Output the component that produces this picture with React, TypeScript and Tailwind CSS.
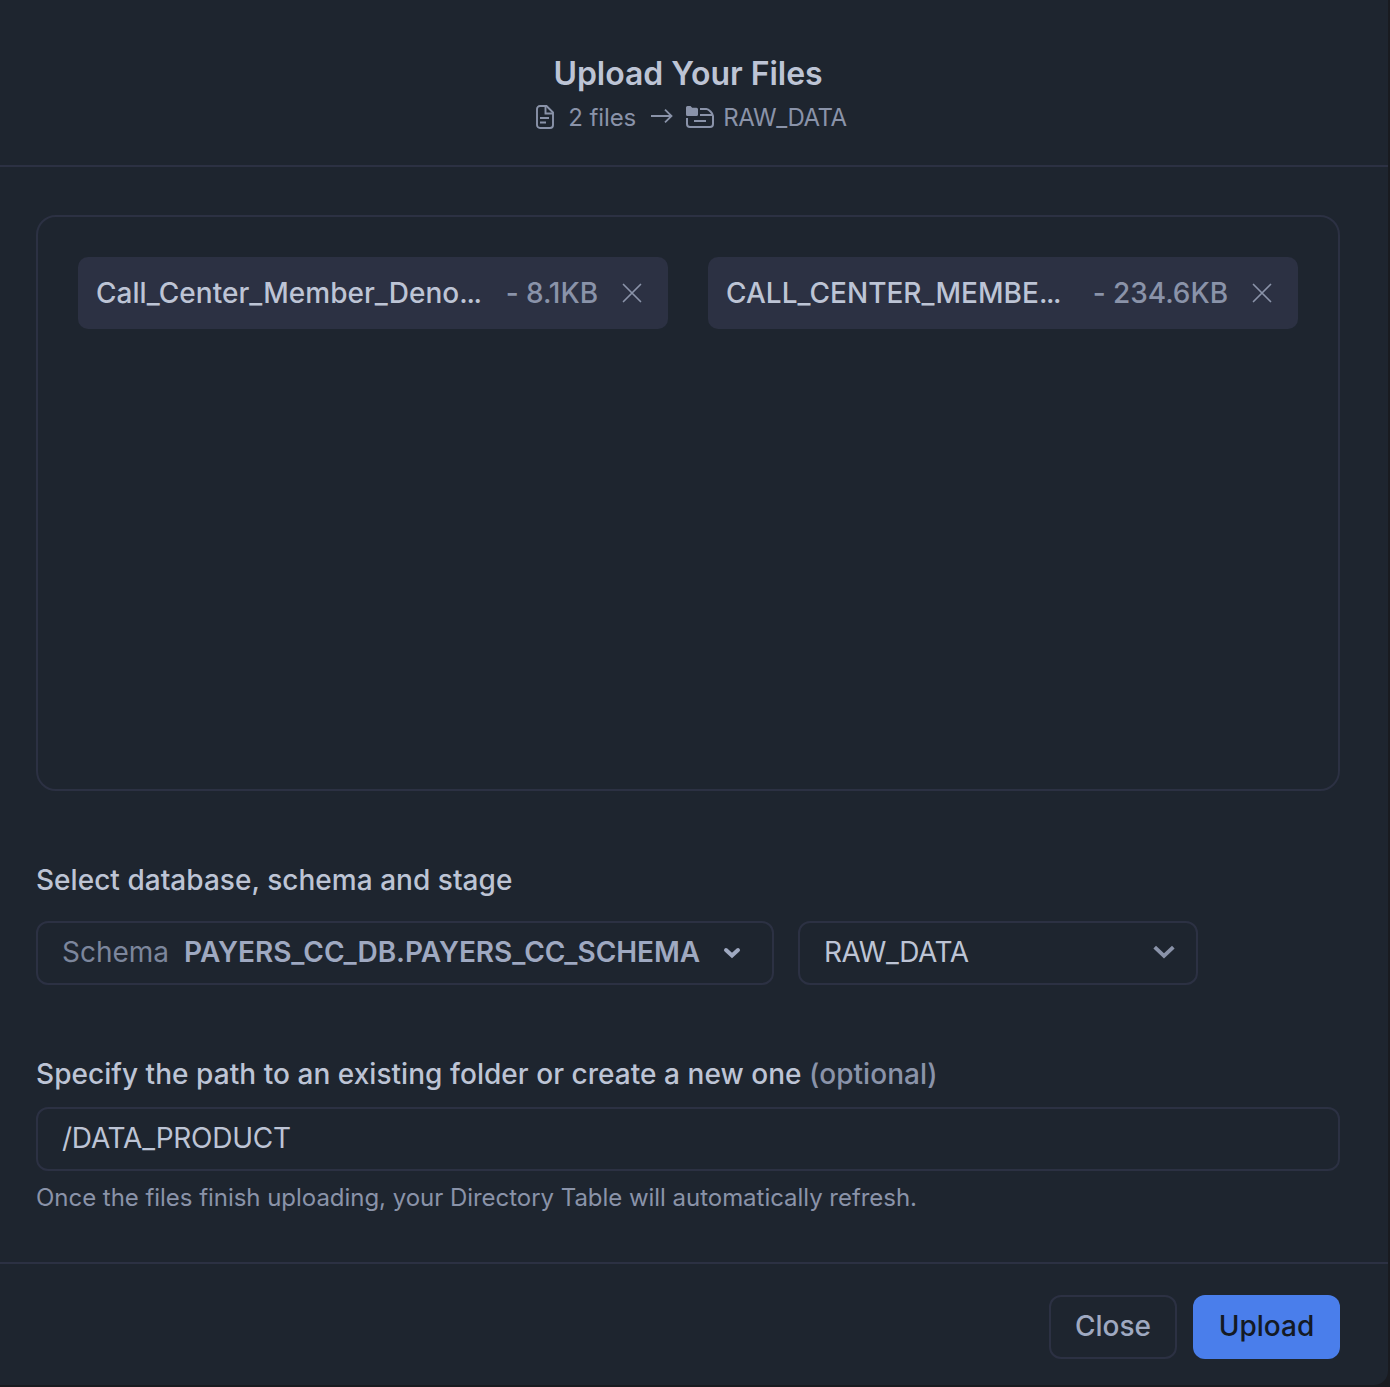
import { useState } from "react";

function DocumentIcon() {
  return (
    <svg className="h-6 w-[18px] shrink-0" viewBox="0 0 18 24" fill="none" stroke="currentColor" strokeWidth="1.9">
      <path d="M1 4A3 3 0 0 1 4 1H10.500L17 7.500V20A3 3 0 0 1 14 23H4A3 3 0 0 1 1 20Z" />
      <path d="M9.500 1V8.500H17M4 13H13M4 17.500H10" />
    </svg>
  );
}

function ArrowIcon() {
  return (
    <svg className="h-[14px] w-[22px] shrink-0" viewBox="0 0 22 14" fill="none" stroke="currentColor" strokeWidth="1.8">
      <path d="M0 7H20.500M14 0.700L20.500 7L14 13.300" />
    </svg>
  );
}

function StageIcon() {
  return (
    <svg className="h-[22px] w-7 shrink-0" viewBox="0 0 28 22" fill="none" stroke="currentColor" strokeWidth="2">
      <path
        d="M0 1.500A1.500 1.500 0 0 1 1.500 0H4.500L6.200 1.800H10.500A1.500 1.500 0 0 1 12 3.300V8.500A1.500 1.500 0 0 1 10.500 10H1.500A1.500 1.500 0 0 1 0 8.500Z"
        fill="currentColor"
        stroke="none"
      />
      <path d="M14 3H20.500C22.500 3 27 7.500 27 10V18A3 3 0 0 1 24 21H4A3 3 0 0 1 1 18V12M14 9H26.500M8 15H20" />
    </svg>
  );
}

function CloseIcon() {
  return (
    <svg className="h-5 w-5 shrink-0 text-[#8a93a9]" viewBox="0 0 20 20" fill="none" stroke="currentColor" strokeWidth="1.7" strokeLinecap="round">
      <path d="M1.500 1.500L18.500 18.500M18.500 1.500L1.500 18.500" />
    </svg>
  );
}

const initialFiles = [
  { name: "Call_Center_Member_Deno", size: "8.1KB" },
  { name: "CALL_CENTER_MEMBE", size: "234.6KB" },
];

export default function App() {
  const [files, setFiles] = useState(initialFiles);
  const [path, setPath] = useState("/DATA_PRODUCT");

  return (
    <div className="h-[1387px] w-[1390px] overflow-hidden bg-[#191b20] font-['Inter',sans-serif] text-[28px] leading-10 text-[#bdc4d5]">
      <main className="flex h-[1385px] w-[1388px] flex-col rounded-br-[14px] bg-[#1e252f]">
        <header className="flex h-[167px] shrink-0 flex-col items-center border-b-2 border-[#2c3143] pt-[54px] pr-12 pl-9">
          <h1 className="text-[32px] leading-10 font-semibold tracking-[-0.03px]">Upload Your Files</h1>
          <div className="mt-[7px] flex h-8 items-center pl-[7px] text-2xl leading-8 text-[#8a93a9]">
            <DocumentIcon />
            <span className="mt-[2px] ml-[14px] tracking-[-0.1px]">2 files</span>
            <span className="mt-[-2px] ml-[15px]">
              <ArrowIcon />
            </span>
            <span className="ml-[13px]">
              <StageIcon />
            </span>
            <span className="mt-[2px] ml-[9px] tracking-[-0.45px]">RAW_DATA</span>
          </div>
        </header>

        <section className="flex grow flex-col pr-12 pl-9">
          <div className="mt-12 grid h-[576px] shrink-0 grid-cols-2 items-start gap-10 rounded-[20px] border-2 border-[#2c3143] p-10">
            {files.map((file) => (
              <div key={file.name} className="flex h-[72px] items-center rounded-[10px] bg-[#2c3143] pr-[26px] pl-[18px] font-medium">
                <span className="grow whitespace-nowrap tracking-[0.03px]">
                  {file.name}
                  <span className="tracking-[-1.4px]">...</span>
                </span>
                <span className="whitespace-nowrap tracking-[-0.05px] text-[#8a93a9]">- {file.size}</span>
                <button
                  className="ml-6 flex"
                  aria-label="Remove file"
                  onClick={() => setFiles(files.filter((f) => f !== file))}
                >
                  <CloseIcon />
                </button>
              </div>
            ))}
          </div>

          <h2 className="mt-[69px] font-medium tracking-[0.03px]">Select database, schema and stage</h2>
          <div className="mt-[21px] flex gap-6">
            <button className="flex h-16 w-[738px] items-center rounded-xl border-2 border-[#2c3143] pb-[2px] pl-6">
              <span className="text-[#7c869c]">Schema</span>
              <span className="ml-[15px] font-semibold tracking-[-0.03px] text-[#9fa9c1]">PAYERS_CC_DB.PAYERS_CC_SCHEMA</span>
              <svg className="mt-[2px] ml-[23px] h-3 w-[18px] text-[#9fa9c1]" viewBox="0 0 18 12" fill="none" stroke="currentColor" strokeWidth="4" strokeLinecap="round">
                <path d="M3 3L9 8.500L15 3" />
              </svg>
            </button>
            <button className="flex h-16 w-[400px] items-center justify-between rounded-xl border-2 border-[#2c3143] pr-5 pb-[2px] pl-6">
              <span className="tracking-[-0.45px]">RAW_DATA</span>
              <svg className="h-[14px] w-6 text-[#8a93a9]" viewBox="0 0 24 14" fill="none" stroke="currentColor" strokeWidth="3.800">
                <path d="M2.700 2.200L12 11L21.300 2.200" />
              </svg>
            </button>
          </div>

          <label htmlFor="path" className="mt-[69px] font-medium tracking-[0.045px]">
            Specify the path to an existing folder or create a new one <span className="text-[#8a93a9]">(optional)</span>
          </label>
          <input
            id="path"
            className="mt-[13px] h-16 rounded-xl border-2 border-[#2c3143] bg-transparent px-6 pb-[2px] tracking-[-0.23px] outline-none"
            value={path}
            onChange={(e) => setPath(e.target.value)}
          />
          <p className="mt-[11px] text-2xl leading-8 tracking-[-0.035px] text-[#8a93a9]">
            Once the files finish uploading, your Directory Table will automatically refresh.
          </p>
        </section>

        <footer className="flex h-[123px] shrink-0 justify-end gap-4 border-t-2 border-[#2c3143] pt-[31px] pr-12 font-medium">
          <button className="h-16 w-32 rounded-xl border-2 border-[#2c3143] pb-[2px] text-[#9fa9c1]">Close</button>
          <button className="h-16 w-[147px] rounded-xl bg-[#4a7eeb] pb-[2px] text-[#141a24]">Upload</button>
        </footer>
      </main>
    </div>
  );
}
